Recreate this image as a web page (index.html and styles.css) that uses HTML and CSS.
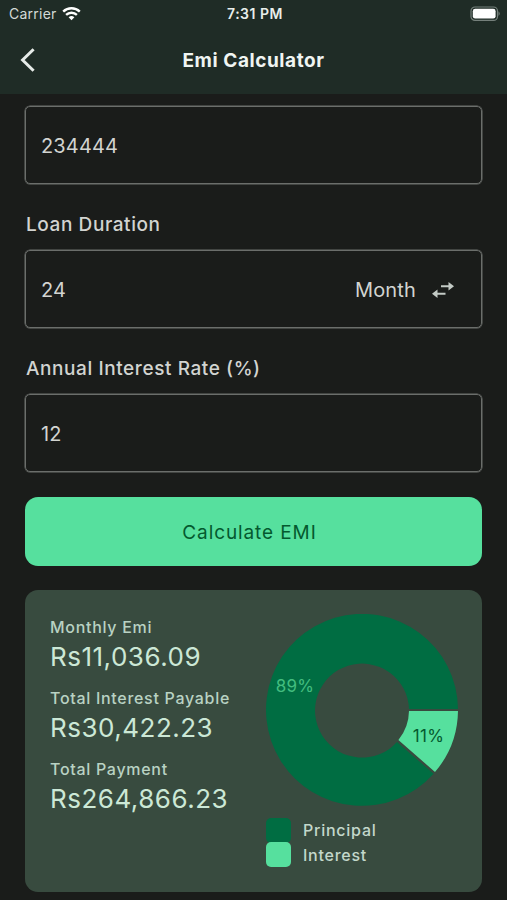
FILE: index.html
```
<!DOCTYPE html>
<html lang="en">
<head>
<meta charset="utf-8">
<title>Emi Calculator</title>
<link rel="stylesheet" href="styles.css">
</head>
<body>
<header>
    <div class="status">
        <div class="carrier">
            <span>Carrier</span>
            <svg class="wifi" viewBox="0 0 19 14" width="19" height="14">
                <path d="M1.2 4.6 A12 12 0 0 1 17.8 4.6" />
                <path d="M4.1 7.9 A7.8 7.8 0 0 1 14.9 7.9" />
                <path class="dot" d="M6.6 10.3 A4.2 4.2 0 0 1 12.4 10.3 L9.5 13.2 Z" />
            </svg>
        </div>
        <span class="time">7:31 PM</span>
        <svg class="battery" viewBox="0 0 31 16" width="31" height="16">
            <rect class="case" x="1" y="1" width="26.5" height="13.4" rx="4" />
            <rect class="level" x="2.8" y="2.8" width="22.8" height="9.8" rx="2.4" />
            <path class="tip" d="M28.5 5.3 Q31 7.7 28.5 10.1 Z" />
        </svg>
    </div>
    <div class="bar">
        <svg class="back" viewBox="0 0 16 24" width="16" height="24">
            <path d="M13.6 1.2 L2.6 12 L13.6 22.8" />
        </svg>
        <h1>Emi Calculator</h1>
    </div>
</header>
<main>
    <div class="field">234444</div>
    <label>Loan Duration</label>
    <div class="field">
        <span>24</span>
        <div class="unit">
            <span>Month</span>
            <svg viewBox="0 0 22 16" width="22" height="16">
                <path d="M9 3.2 H16.5 V0 L22 4.3 L16.5 8.4 V5.3 H9 Z" />
                <path d="M13.5 10.7 H5.5 V7.6 L0 11.8 L5.5 16 V12.8 H13.5 Z" />
            </svg>
        </div>
    </div>
    <label>Annual Interest Rate (%)</label>
    <div class="field">12</div>
    <div class="button">Calculate EMI</div>
    <section class="card">
        <dl>
            <dt>Monthly Emi</dt>
            <dd>Rs11,036.09</dd>
            <dt>Total Interest Payable</dt>
            <dd>Rs30,422.23</dd>
            <dt>Total Payment</dt>
            <dd>Rs264,866.23</dd>
        </dl>
        <div class="chart">
            <svg viewBox="-96 -96 192 192" width="192" height="192">
                <path class="principal" d="M96 -1 A96 96 0 1 0 71.6 63.8 L35 32 A47 47 0 1 1 47 -1 Z" />
                <path class="interest" d="M96 1 A96 96 0 0 1 73 62 L36.4 30 A47 47 0 0 0 47 1 Z" />
                <text class="big" x="-67" y="-18.5">89%</text>
                <text class="small" x="66.5" y="31.5">11%</text>
            </svg>
            <ul>
                <li><i class="swatch principal"></i>Principal</li>
                <li><i class="swatch interest"></i>Interest</li>
            </ul>
        </div>
    </section>
</main>
</body>
</html>
```
FILE: styles.css
```
* {
    box-sizing: border-box;
    margin: 0;
    padding: 0;
}
body {
    height: 900px;
    overflow: hidden;
    background-color: #1a1c1a;
    color: #d2d4d1;
    font-family: Inter, sans-serif;
}
header {
    height: 94px;
    background-color: #1f2c26;
}
.status {
    display: grid;
    grid-template-columns: 1fr auto 1fr;
    align-items: center;
    height: 27px;
    padding: 0 6px 0 9px;
    font-size: 14px;
}
.carrier {
    display: flex;
    align-items: center;
    gap: 5px;
    color: #d3dad6;
    letter-spacing: 0.25px;
}
.wifi {
    fill: none;
    stroke: #fff;
    stroke-width: 2.4;
}
.wifi .dot {
    fill: #fff;
    stroke: none;
}
.time {
    color: #e8eeeb;
    font-weight: 600;
    letter-spacing: 0.5px;
}
.battery {
    justify-self: end;
}
.case {
    fill: none;
    stroke: #75807b;
    stroke-width: 1.2;
}
.level {
    fill: #fff;
}
.tip {
    fill: #75807b;
}
.bar {
    display: grid;
    grid-template-columns: 40px 1fr 40px;
    align-items: center;
    height: 65px;
    padding: 0 20px;
}
.back {
    fill: none;
    stroke: #e6ebe8;
    stroke-width: 3;
}
h1 {
    padding-top: 1px;
    color: #f0f5f2;
    font-size: 19px;
    font-weight: 700;
    letter-spacing: 0.57px;
    text-align: center;
}
main {
    padding: 12px 25px 0;
}
.field {
    display: flex;
    align-items: center;
    justify-content: space-between;
    height: 78px;
    padding: 2px 27px 0 15px;
    border: 1px solid #6b6e6b;
    border-radius: 5px;
    box-shadow: 0 0 0 0.5px #6b6e6b;
    font-size: 20px;
    letter-spacing: 0.15px;
}
.unit {
    display: flex;
    align-items: center;
    gap: 16px;
}
.unit svg {
    fill: #c3cac5;
}
label {
    display: block;
    height: 66px;
    padding: 13px 0 0 1px;
    font-size: 19px;
    font-weight: 500;
    line-height: 56px;
    letter-spacing: 0.58px;
}
.button {
    height: 69px;
    margin-top: 25px;
    padding: 1px 8px 0 0;
    border-radius: 13px;
    background-color: #56e09e;
    color: #04592f;
    font-size: 19px;
    line-height: 69px;
    letter-spacing: 0.9px;
    text-align: center;
}
.card {
    display: flex;
    justify-content: space-between;
    height: 302px;
    margin-top: 24px;
    padding: 24px 24px 0 25px;
    border-radius: 13px;
    background-color: #384b3f;
    color: #cce8d6;
}
dt {
    height: 25px;
    color: #b9d2c3;
    font-size: 16px;
    font-weight: 500;
    line-height: 26px;
    letter-spacing: 0.7px;
}
dd {
    height: 46px;
    font-size: 26px;
    line-height: 36px;
    letter-spacing: 0.5px;
}
.chart svg {
    display: block;
}
.chart .principal {
    fill: #006d42;
    background-color: #006d42;
}
.chart .interest {
    fill: #56e09e;
    background-color: #56e09e;
}
text {
    font-size: 17px;
    text-anchor: middle;
    letter-spacing: 0.3px;
}
.big {
    fill: #43bd7f;
}
.small {
    fill: #04592f;
}
ul {
    margin-top: 12px;
    list-style: none;
}
li {
    display: flex;
    align-items: center;
    gap: 12px;
    height: 24.5px;
    color: #c3d8cb;
    font-size: 16px;
    font-weight: 500;
    line-height: 26px;
    letter-spacing: 0.75px;
}
.swatch {
    width: 25px;
    height: 25px;
    border-radius: 5px;
}
```
